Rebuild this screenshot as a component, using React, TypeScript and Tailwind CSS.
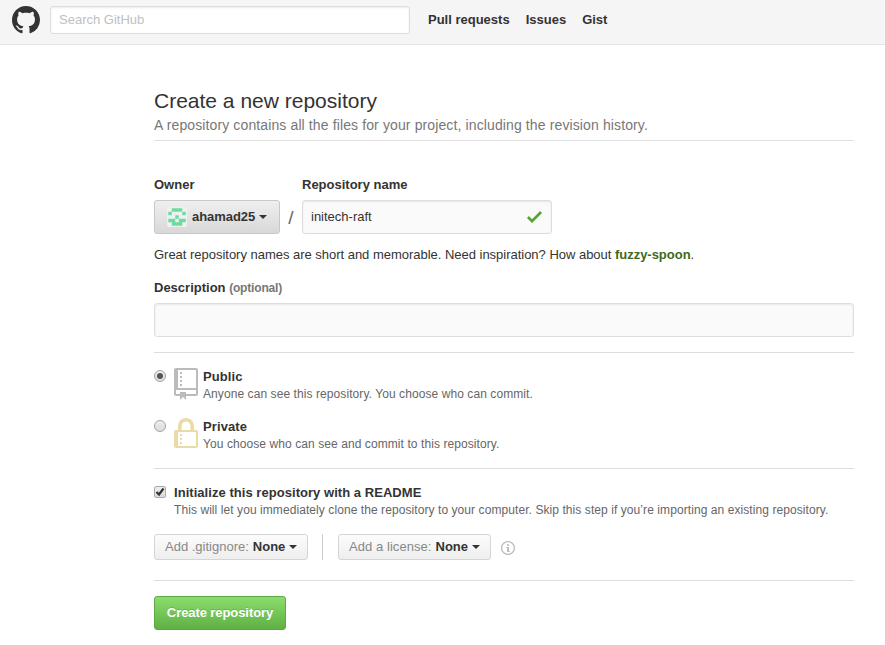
import React from 'react';

const Caret = () => (
  <span className="ml-1 h-0 w-0 border-x-4 border-t-4 border-x-transparent border-t-[#333]" />
);

const Identicon = () => (
  <svg width="20" height="20" viewBox="0 0 20 20" className="shrink-0">
    <rect width="20" height="20" rx="2" fill="#f0f0f0" />
    <g fill="#6edb9f" transform="translate(1.3 1.3) scale(3.5)">
      <path d="M1 0h3v1H1zM0 1h1v1H0zM4 1h1v1H4zM2 2h1v1H2zM0 3h2v1H0zM3 3h2v1H3zM1 4h3v1H1z" />
    </g>
  </svg>
);

function Option({ title, text, checked, children }: { title: string; text: string; checked: boolean; children: React.ReactNode }) {
  return (
    <div className="flex h-[50px] items-start">
      <span className="mt-[2px] flex size-3 shrink-0 items-center justify-center rounded-full border border-[#a3a3a3] bg-linear-to-b from-[#eee] to-[#dcdcdc]">
        {checked && <span className="size-1.5 rounded-full bg-[#555]" />}
      </span>
      <span className="ml-2 w-6 shrink-0">{children}</span>
      <div className="ml-[5px]">
        <div className="h-[18px] text-[13px] leading-[18px] font-bold tracking-[0.1px]">{title}</div>
        <div className="text-[12px] leading-[16px] tracking-[0.08px] whitespace-nowrap text-[#666]">{text}</div>
      </div>
    </div>
  );
}

export default function App() {
  return (
    <div className="h-[645px] w-[885px] overflow-hidden bg-white font-['Liberation_Sans',Arial,sans-serif] text-[13px] leading-[18px] text-[#333]">
      <header className="flex h-[45px] items-start border-b border-[#e5e5e5] bg-[#f5f5f5] pt-1.5 pl-3">
        <svg width="28" height="28" viewBox="0 0 16 16" fill="#333">
          <path d="M8 0C3.58 0 0 3.58 0 8c0 3.54 2.29 6.53 5.47 7.59.4.07.55-.17.55-.38 0-.19-.01-.82-.01-1.49-2.01.37-2.53-.49-2.69-.94-.09-.23-.48-.94-.82-1.13-.28-.15-.68-.52-.01-.53.63-.01 1.08.58 1.23.82.72 1.21 1.87.87 2.33.66.07-.52.28-.87.51-1.07-1.78-.2-3.64-.89-3.64-3.95 0-.87.31-1.59.82-2.15-.08-.2-.36-1.02.08-2.12 0 0 .67-.21 2.2.82.64-.18 1.32-.27 2-.27s1.36.09 2 .27c1.53-1.04 2.2-.82 2.2-.82.44 1.1.16 1.92.08 2.12.51.56.82 1.27.82 2.15 0 3.07-1.87 3.75-3.65 3.95.29.25.54.73.54 1.48V15.210c0 .21.15.46.55.38A8.01 8.01 0 0 0 16 8c0-4.42-3.58-8-8-8z" />
        </svg>
        <div className="ml-2.5 flex h-7 w-[360px] items-center rounded-[3px] border border-[#ddd] bg-white px-2 text-[#c0c0c0] shadow-[inset_0_1px_2px_rgba(0,0,0,0.075)]">Search GitHub</div>
        <nav className="ml-[18px] flex h-7 items-center gap-4 font-bold">
          <a>Pull requests</a>
          <a>Issues</a>
          <a>Gist</a>
        </nav>
      </header>

      <main className="ml-[154px] w-[700px] pt-11">
        <div className="h-[52px] border-b border-[#e0e0e0]">
          <h1 className="text-[21px] leading-6">Create a new repository</h1>
          <p className="mt-0.5 text-[14px] leading-[20px] tracking-[0.12px] text-[#777]">A repository contains all the files for your project, including the revision history.</p>
        </div>

        <div className="mt-[35px] flex">
          <div className="w-[126px]">
            <div className="h-6 font-bold">Owner</div>
            <button className="flex h-[34px] w-[126px] items-center rounded-[3px] border border-[#c8c8c8] bg-linear-to-b from-[#efefef] to-[#d8d8d8] pl-3 font-bold">
              <Identicon />
              <span className="ml-[5px] tracking-[-0.05px]">ahamad25</span>
              <Caret />
            </button>
          </div>
          <span className="mt-[30px] w-[22px] text-center text-[19px] leading-6 text-[#666]">/</span>
          <div>
            <div className="h-6 font-bold">Repository name</div>
            <div className="flex h-[34px] w-[250px] items-center justify-between rounded-[3px] border border-[#ddd] bg-[#fafafa] pr-[9px] pl-2 shadow-[inset_0_1px_2px_rgba(0,0,0,0.075)]">
              <span>initech-raft</span>
              <svg width="15" height="12" viewBox="0 0 12 9.5" fill="#55a532"><path d="M12 1.5l-8 8-4-4L1.500 4 4 6.500 10.500 0z" /></svg>
            </div>
          </div>
        </div>

        <p className="mt-3 tracking-[-0.02px] whitespace-nowrap">Great repository names are short and memorable. Need inspiration? How about <b className="text-[#3c6a1e]">fuzzy-spoon</b>.</p>

        <div className="mt-[15px] h-6 font-bold">Description <span className="text-[12px] tracking-[-0.17px] text-[#777]">(optional)</span></div>
        <div className="h-[34px] rounded-[3px] border border-[#ddd] bg-[#fafafa] shadow-[inset_0_1px_2px_rgba(0,0,0,0.075)]" />

        <div className="mt-[15px] h-[117px] border-y border-[#ddd] pt-[15px]">
          <Option title="Public" text="Anyone can see this repository. You choose who can commit." checked>
            <svg width="24" height="32" viewBox="0 0 12 16" fill="#bbb">
              <path d="M4 9H3V8h1v1zm0-3H3v1h1V6zm0-2H3v1h1V4zm0-2H3v1h1V2zm8-1v12c0 .55-.45 1-1 1H6v2l-1.500-1.500L3 16v-2H1c-.55 0-1-.45-1-1V1c0-.55.45-1 1-1h10c.55 0 1 .45 1 1zm-1 10H1v2h2v-1h3v1h5v-2zm0-10H2v9h9V1z" />
            </svg>
          </Option>
          <Option title="Private" text="You choose who can see and commit to this repository." checked={false}>
            <svg width="24" height="32" viewBox="0 0 12 16" fill="#e9dba5">
              <path d="M4 13H3v-1h1v1zm8-6v7c0 .55-.45 1-1 1H1c-.55 0-1-.45-1-1V7c0-.55.45-1 1-1h1V4c0-2.200 1.800-4 4-4s4 1.800 4 4v2h1c.55 0 1 .45 1 1zM3.800 6h4.410V4c0-1.220-.98-2.200-2.200-2.200-1.220 0-2.200.98-2.200 2.200v2H3.800zM11 7H2v7h9V7zM4 8H3v1h1V8zm0 2H3v1h1v-1z" />
            </svg>
          </Option>
        </div>

        <div className="mt-[15px] flex">
          <span className="mt-[2px] flex size-3 shrink-0 items-center justify-center rounded-[2px] border border-[#aaa] bg-linear-to-b from-[#eee] to-[#dcdcdc]">
            <svg width="10" height="10" viewBox="0 0 10 10" fill="none" stroke="#333" strokeWidth="2.2"><path d="M1.500 5L4 7.500 8.500 1.500" /></svg>
          </span>
          <div className="ml-2">
            <div className="h-[18px] font-bold tracking-[0.045px]">Initialize this repository with a README</div>
            <div className="text-[12px] leading-4 tracking-[0.076px] whitespace-nowrap text-[#666]">This will let you immediately clone the repository to your computer. Skip this step if you’re importing an existing repository.</div>
          </div>
        </div>

        <div className="mt-4 flex h-[26px] items-center">
          <button className="flex h-[26px] w-[154px] items-center rounded-[3px] border border-[#d5d5d5] bg-linear-to-b from-[#fcfcfc] to-[#eee] pl-2.5 text-[#888]">
            <span>Add .gitignore:</span><b className="ml-1 text-[#333]">None</b><Caret />
          </button>
          <span className="mx-[14px] h-[26px] w-px bg-[#ccc]" />
          <button className="ml-px flex h-[26px] w-[153px] items-center rounded-[3px] border border-[#d5d5d5] bg-linear-to-b from-[#fcfcfc] to-[#eee] pl-2.5 text-[#888]">
            <span className="tracking-[0.06px]">Add a license:</span><b className="ml-1 text-[#333]">None</b><Caret />
          </button>
          <svg width="14" height="16" viewBox="0 0 14 16" fill="#bbb" className="mt-0.5 ml-2.5">
            <path d="M6.300 5.690a.942.942 0 01-.28-.7c0-.28.09-.52.28-.7.19-.18.42-.28.7-.28.28 0 .52.09.7.28.18.19.28.42.28.7 0 .28-.09.52-.28.7a1 1 0 01-.7.3c-.28 0-.52-.11-.7-.3zM8 7.990c-.02-.25-.11-.48-.31-.69-.2-.19-.42-.3-.69-.31H6c-.27.02-.48.13-.69.31-.2.2-.3.44-.31.69h1v3c.02.27.11.5.31.69.2.2.42.31.69.31h1c.27 0 .48-.11.69-.31.2-.19.3-.42.31-.69H8V7.980v.01zM7 2.300c-3.140 0-5.700 2.540-5.700 5.680 0 3.140 2.560 5.700 5.700 5.700s5.700-2.550 5.700-5.700c0-3.150-2.560-5.690-5.700-5.690v.01zM7 .98c3.860 0 7 3.140 7 7s-3.140 7-7 7-7-3.120-7-7 3.140-7 7-7z" />
          </svg>
        </div>

        <div className="mt-5 border-t border-[#ddd] pt-[15px]">
          <button className="h-[34px] w-[132px] rounded-[3px] border border-[#5ca941] bg-linear-to-b from-[#8add6d] to-[#60b044] font-bold tracking-[-0.08px] whitespace-nowrap text-white [text-shadow:0_-1px_0_rgba(0,0,0,0.15)]">Create repository</button>
        </div>
      </main>
    </div>
  );
}
